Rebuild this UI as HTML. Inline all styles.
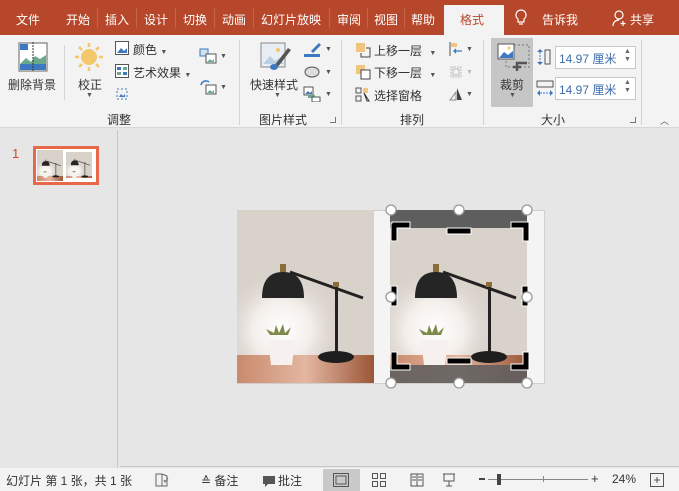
<!DOCTYPE html>
<html><head><meta charset="utf-8"><style>
*{margin:0;padding:0;box-sizing:border-box}
body{width:679px;height:491px;overflow:hidden;background:#e6e6e6;font-family:"Liberation Sans","Noto Sans CJK SC",sans-serif;font-size:12px;color:#333;position:relative}
.a{position:absolute;white-space:nowrap}
.tab{position:absolute;top:11px;color:#fff;font-size:12px}
.sep{position:absolute;top:8px;width:1px;height:20px;background:#c4654a}
.vs{position:absolute;width:1px;background:#d4d4d4}
.dd{font-size:7px;color:#555}
.grp{position:absolute;top:111px;font-size:12px;color:#333}
</style></head><body>
<div class="a" style="left:0;top:0;width:679px;height:35px;background:#b7472a"></div>
<div class="tab" style="left:16px">文件</div>
<div class="tab" style="left:66px">开始</div><div class="sep" style="left:97px"></div>
<div class="tab" style="left:105px">插入</div><div class="sep" style="left:136px"></div>
<div class="tab" style="left:144px">设计</div><div class="sep" style="left:175px"></div>
<div class="tab" style="left:183px">切换</div><div class="sep" style="left:214px"></div>
<div class="tab" style="left:222px">动画</div><div class="sep" style="left:253px"></div>
<div class="tab" style="left:261px">幻灯片放映</div><div class="sep" style="left:329px"></div>
<div class="tab" style="left:337px">审阅</div><div class="sep" style="left:367px"></div>
<div class="tab" style="left:374px">视图</div><div class="sep" style="left:404px"></div>
<div class="tab" style="left:411px">帮助</div>
<div class="a" style="left:444px;top:5px;width:60px;height:31px;background:#f3f3f3"></div>
<div class="a" style="left:460px;top:11px;color:#b7472a">格式</div>
<svg class="a" style="left:514px;top:9px" width="14" height="18"><path d="M7 1a5 5 0 0 0-3 9v3h6v-3a5 5 0 0 0-3-9zM5 15h4" fill="none" stroke="#fff" stroke-width="1.2"/></svg>
<div class="tab" style="left:542px">告诉我</div>
<svg class="a" style="left:612px;top:9px" width="16" height="18"><circle cx="7" cy="6" r="4" fill="none" stroke="#fff" stroke-width="1.2"/><path d="M1 17c0-4 3-6 6-6M11 12v5M8.5 14.5h5" fill="none" stroke="#fff" stroke-width="1.2"/></svg>
<div class="tab" style="left:630px">共享</div>
<div class="a" style="left:0;top:35px;width:679px;height:93px;background:#f3f3f3;border-bottom:1px solid #d6d6d6"></div>
<svg class="a" style="left:18px;top:42px" width="30" height="30"><rect x="1" y="1" width="28" height="28" fill="#fff" stroke="#666"/><rect x="2" y="2" width="8" height="6" fill="#3d79c1"/><path d="M2 22l6-6 5 4 4-6 5 3 6-4v10H2z" fill="#6aa88c"/><rect x="2" y="22" width="26" height="6" fill="#3d79c1"/><line x1="15" y1="0" x2="15" y2="30" stroke="#333" stroke-dasharray="2 1"/></svg>
<div class="a" style="left:8px;top:76px">删除背景</div>
<div class="vs" style="left:64px;top:45px;height:55px"></div>
<svg class="a" style="left:74px;top:42px" width="30" height="30"><circle cx="15" cy="15" r="8" fill="#f2c86a"/><g stroke="#f2c86a" stroke-width="2.5"><line x1="15" y1="1" x2="15" y2="5"/><line x1="15" y1="25" x2="15" y2="29"/><line x1="1" y1="15" x2="5" y2="15"/><line x1="25" y1="15" x2="29" y2="15"/><line x1="5" y1="5" x2="8" y2="8"/><line x1="22" y1="22" x2="25" y2="25"/><line x1="5" y1="25" x2="8" y2="22"/><line x1="22" y1="8" x2="25" y2="5"/></g></svg>
<div class="a" style="left:78px;top:76px">校正</div>
<div class="a dd" style="left:86px;top:92px">▼</div>
<svg class="a" style="left:115px;top:41px" width="14" height="14"><rect x=".5" y=".5" width="13" height="13" fill="#fff" stroke="#555"/><path d="M2 12l4-5 3 3 3-3v5z" fill="#3d79c1"/></svg>
<div class="a" style="left:133px;top:41px">颜色 <span class="dd">▼</span></div>
<svg class="a" style="left:115px;top:64px" width="14" height="14"><rect x=".5" y=".5" width="13" height="13" fill="#fff" stroke="#555"/><rect x="2" y="3" width="4" height="3" fill="#3d79c1"/><rect x="8" y="3" width="4" height="3" fill="#6aa88c"/><rect x="2" y="8" width="4" height="3" fill="#6aa88c"/><rect x="8" y="8" width="4" height="3" fill="#3d79c1"/></svg>
<div class="a" style="left:133px;top:64px">艺术效果 <span class="dd">▼</span></div>
<svg class="a" style="left:115px;top:87px" width="14" height="14"><rect x="2" y="2" width="10" height="10" fill="none" stroke="#3d79c1" stroke-dasharray="2 2"/><path d="M4 10l2-3 2 2 2-2v3z" fill="#3d79c1"/></svg>
<svg class="a" style="left:199px;top:48px" width="18" height="16"><rect x="1" y="1" width="8" height="7" fill="#cfe0ee" stroke="#3d79c1"/><rect x="7" y="6" width="10" height="9" fill="#fff" stroke="#555"/><path d="M8 14l3-3 2 2 2-2v3z" fill="#6aa88c"/></svg><div class="a dd" style="left:220px;top:53px">▼</div>
<svg class="a" style="left:199px;top:79px" width="18" height="16"><path d="M2 6a5 5 0 0 1 8-3" fill="none" stroke="#3d79c1" stroke-width="1.5"/><rect x="7" y="6" width="10" height="9" fill="#fff" stroke="#555"/><path d="M8 14l3-3 2 2 2-2v3z" fill="#6aa88c"/></svg><div class="a dd" style="left:220px;top:84px">▼</div>
<div class="grp" style="left:107px">调整</div>
<div class="vs" style="left:239px;top:40px;height:85px"></div>
<svg class="a" style="left:260px;top:42px" width="34" height="30"><rect x="1" y="1" width="24" height="24" fill="#e8eef4" stroke="#888"/><path d="M3 22l7-8 5 5 4-3 5 6z" fill="#b8cfe6"/><circle cx="18" cy="8" r="2" fill="#f2c86a"/><path d="M14 24l14-18 3 2-14 18z" fill="#555"/><ellipse cx="14" cy="25" rx="4" ry="3" fill="#3d79c1"/></svg>
<div class="a" style="left:250px;top:76px">快速样式</div>
<div class="a dd" style="left:274px;top:92px">▼</div>
<svg class="a" style="left:303px;top:41px" width="18" height="16"><path d="M8 10l8-8 2 2-8 8z" fill="#3d79c1"/><rect x="1" y="13" width="16" height="3" fill="#3d79c1"/></svg><div class="a dd" style="left:325px;top:46px">▼</div>
<svg class="a" style="left:303px;top:64px" width="18" height="16"><ellipse cx="9" cy="8" rx="7" ry="5" fill="#ddd" stroke="#555"/></svg><div class="a dd" style="left:325px;top:69px">▼</div>
<svg class="a" style="left:303px;top:86px" width="18" height="16"><rect x="1" y="1" width="9" height="8" fill="#fff" stroke="#555"/><path d="M2 8l3-3 2 2 2-2v3z" fill="#3d79c1"/><rect x="5" y="9" width="7" height="3" fill="#6aa88c"/><rect x="9" y="11" width="8" height="5" fill="#fff" stroke="#555"/></svg><div class="a dd" style="left:325px;top:91px">▼</div>
<div class="grp" style="left:259px">图片样式</div>
<div class="a" style="left:330px;top:117px;width:6px;height:6px;border-right:1px solid #777;border-bottom:1px solid #777"></div>
<div class="vs" style="left:341px;top:40px;height:85px"></div>
<svg class="a" style="left:355px;top:42px" width="16" height="16"><rect x="1" y="1" width="9" height="9" fill="#f0c57e"/><path d="M6 11v4h9V6h-4" fill="none" stroke="#444"/></svg>
<div class="a" style="left:374px;top:42px">上移一层 <span class="dd" style="margin-left:4px">▼</span></div>
<svg class="a" style="left:355px;top:64px" width="16" height="16"><rect x="1" y="1" width="9" height="9" fill="#f0c57e"/><rect x="6" y="6" width="9" height="9" fill="#fff" stroke="#444"/></svg>
<div class="a" style="left:374px;top:64px">下移一层 <span class="dd" style="margin-left:4px">▼</span></div>
<svg class="a" style="left:355px;top:87px" width="16" height="16"><rect x="1" y="1" width="5" height="5" fill="none" stroke="#555"/><rect x="1" y="9" width="5" height="5" fill="none" stroke="#555"/><rect x="8" y="1" width="5" height="5" fill="#f0c57e"/><path d="M9 6l5 8-2 0z" fill="#fff" stroke="#333"/></svg>
<div class="a" style="left:374px;top:87px">选择窗格</div>
<svg class="a" style="left:448px;top:41px" width="16" height="16"><line x1="2" y1="1" x2="2" y2="15" stroke="#555"/><rect x="3" y="2" width="6" height="4" fill="#f0c57e"/><path d="M14 10H6m2-2-2 2 2 2" fill="none" stroke="#3d79c1" stroke-width="1.3"/></svg><div class="a dd" style="left:466px;top:46px">▼</div>
<svg class="a" style="left:448px;top:64px" width="16" height="16"><rect x="3" y="3" width="10" height="10" fill="none" stroke="#bbb" stroke-dasharray="2 1"/><rect x="5" y="5" width="6" height="6" fill="none" stroke="#bbb"/></svg><div class="a dd" style="left:466px;top:69px;color:#bbb">▼</div>
<svg class="a" style="left:448px;top:86px" width="16" height="16"><path d="M2 14l6-8v8z" fill="none" stroke="#888"/><path d="M9 2v12h5z" fill="#444"/></svg><div class="a dd" style="left:466px;top:91px">▼</div>
<div class="grp" style="left:400px">排列</div>
<div class="vs" style="left:483px;top:40px;height:85px"></div>
<div class="a" style="left:491px;top:38px;width:42px;height:69px;background:#c6c6c6"></div>
<svg class="a" style="left:497px;top:43px" width="34" height="32"><rect x="9" y="2" width="23" height="22" fill="none" stroke="#777" stroke-dasharray="2 2"/><rect x="1" y="1" width="16" height="15" fill="#fff" stroke="#555"/><path d="M2 15l5-6 4 3 5-4v7z" fill="#3d79c1"/><circle cx="12" cy="5" r="1.5" fill="#f2c86a"/><path d="M20 28v-8h10M24 24h-8" stroke="#555" stroke-width="2.5" fill="none"/></svg>
<div class="a" style="left:500px;top:76px">裁剪</div>
<div class="a dd" style="left:509px;top:92px">▼</div>
<svg class="a" style="left:536px;top:48px" width="16" height="18"><path d="M4 1l3 3H1zM4 17l3-3H1z" fill="#3d79c1"/><line x1="4" y1="4" x2="4" y2="14" stroke="#3d79c1" stroke-dasharray="2 1"/><rect x="9" y="2" width="5" height="14" fill="none" stroke="#555"/></svg>
<div class="a" style="left:555px;top:46px;width:81px;height:23px;background:#fff;border:1px solid #c8c8c8"></div>
<div class="a" style="left:559px;top:50px;color:#3d6ea8;font-size:12px">14.97 厘米</div>
<div class="a dd" style="left:624px;top:48px;line-height:8px;color:#666">▲<br>▼</div>
<svg class="a" style="left:536px;top:80px" width="18" height="18"><rect x="1" y="1" width="16" height="6" fill="none" stroke="#555"/><path d="M1 13l3-3v6zM17 13l-3-3v6z" fill="#3d79c1"/><line x1="4" y1="13" x2="14" y2="13" stroke="#3d79c1" stroke-dasharray="2 1"/></svg>
<div class="a" style="left:555px;top:77px;width:81px;height:23px;background:#fff;border:1px solid #c8c8c8"></div>
<div class="a" style="left:559px;top:81px;color:#3d6ea8;font-size:12px">14.97 厘米</div>
<div class="a dd" style="left:624px;top:79px;line-height:8px;color:#666">▲<br>▼</div>
<div class="grp" style="left:541px">大小</div>
<div class="a" style="left:630px;top:117px;width:6px;height:6px;border-right:1px solid #777;border-bottom:1px solid #777"></div>
<div class="vs" style="left:641px;top:40px;height:85px"></div>
<div class="a" style="left:660px;top:114px;font-size:9px;color:#555">︿</div>
<div class="a" style="left:117px;top:130px;width:1px;height:338px;background:#c8c8c8"></div>
<div class="a" style="left:120px;top:466px;width:559px;height:1px;background:#c8c8c8"></div>
<div class="a" style="left:12px;top:146px;color:#d24726;font-size:13px">1</div>
<div class="a" style="left:33px;top:146px;width:66px;height:39px;border:3px solid #e8694a;background:#fff"></div>
<svg class="a" style="left:37px;top:150px" width="26" height="31" viewBox="0 0 137 173" preserveAspectRatio="none"><use href="#ph"/></svg>
<svg class="a" style="left:66px;top:152px" width="26" height="26" viewBox="0 18 137 137" preserveAspectRatio="none"><use href="#ph"/></svg>
<div class="a" style="left:237px;top:210px;width:308px;height:174px;background:#f4f4f4;border:1px solid #cfcfcf"></div>
<svg class="a" style="left:237px;top:210px" width="137" height="173" viewBox="0 0 137 173">
<defs>
<radialGradient id="gl" cx="45" cy="120" r="60" gradientUnits="userSpaceOnUse"><stop offset="0" stop-color="#fff"/><stop offset=".5" stop-color="#f3eeea"/><stop offset="1" stop-color="#ddd5cf" stop-opacity="0"/></radialGradient>
<linearGradient id="tb" x1="0" y1="0" x2="1" y2="0"><stop offset="0" stop-color="#c98a6e"/><stop offset=".5" stop-color="#e3b7a1"/><stop offset="1" stop-color="#9b5638"/></linearGradient>
<g id="ph">
<rect width="137" height="173" fill="#d9d2cb"/>
<rect width="137" height="173" fill="url(#gl)"/>
<rect y="145" width="137" height="28" fill="url(#tb)"/>
<path d="M53 62L126 88" stroke="#222" stroke-width="3"/>
<rect x="43" y="54" width="6" height="10" fill="#8a6d3b"/>
<path d="M25 88Q25 62 46 62Q67 62 67 88z" fill="#252525"/>
<rect x="98" y="74" width="3" height="72" fill="#222"/>
<rect x="96" y="72" width="6" height="5" fill="#8a6d3b"/>
<ellipse cx="99" cy="147" rx="18" ry="6" fill="#1e1e1e"/>
<path d="M33 125l-4-6 8 4 2-8 3 8 4-9 2 9 6-6-3 8z" fill="#7d8a4a"/>
<path d="M31 130h27l-3 25H34z" fill="#f6f1ef"/>
</g></defs>
<use href="#ph"/>
</svg>
<svg class="a" style="left:390px;top:210px" width="137" height="173" viewBox="0 0 137 173"><use href="#ph"/><rect width="137" height="18" fill="#5e5e5e"/><rect y="155" width="137" height="18" fill="#5e5e5e" opacity=".88"/></svg>
<svg class="a" style="left:383px;top:203px" width="152" height="187">
<g fill="#000" stroke="#fff" stroke-width="1">
<path d="M8 26V20h1v-1h18v6H14v13H8z"/>
<path d="M129 25h-1v-6h18v19h-6V25z"/>
<path d="M8 149h6v12h13v6H8z"/>
<path d="M140 149h6v18h-18v-6h12z"/>
<rect x="64" y="25" width="24" height="6"/>
<rect x="64" y="155" width="24" height="6"/>
<rect x="8" y="83" width="6" height="20"/>
<rect x="139" y="83" width="6" height="20"/>
</g>
<g fill="#fff" stroke="#999" stroke-width="1.3">
<circle cx="8" cy="7" r="5"/><circle cx="76" cy="7" r="5"/><circle cx="144" cy="7" r="5"/>
<circle cx="8" cy="180" r="5"/><circle cx="76" cy="180" r="5"/><circle cx="144" cy="180" r="5"/>
<circle cx="8" cy="94" r="5"/><circle cx="144" cy="94" r="5"/>
</g></svg>
<div class="a" style="left:0;top:468px;width:679px;height:23px;background:#f3f3f3"></div>
<div class="a" style="left:6px;top:472px">幻灯片 第 1 张，共 1 张</div>
<svg class="a" style="left:155px;top:473px" width="14" height="14"><path d="M1 1h6v12H1zM7 1l5 2v10H7" fill="none" stroke="#666"/><path d="M9 7l1 2 3-4" fill="none" stroke="#666"/></svg>
<div class="a" style="left:201px;top:472px">≙ 备注</div>
<svg class="a" style="left:262px;top:474px" width="14" height="13"><path d="M1 2h12v8H6l-3 3v-3H1z" fill="#555"/></svg>
<div class="a" style="left:278px;top:472px">批注</div>
<div class="a" style="left:323px;top:469px;width:37px;height:22px;background:#c9c9c9"></div>
<svg class="a" style="left:333px;top:473px" width="16" height="14"><rect x=".5" y=".5" width="15" height="13" fill="none" stroke="#555"/><rect x="3" y="3" width="10" height="8" fill="none" stroke="#555"/></svg>
<svg class="a" style="left:372px;top:473px" width="14" height="14"><g fill="none" stroke="#555"><rect x=".5" y=".5" width="5" height="5"/><rect x="8.5" y=".5" width="5" height="5"/><rect x=".5" y="8.5" width="5" height="5"/><rect x="8.5" y="8.5" width="5" height="5"/></g></svg>
<svg class="a" style="left:410px;top:473px" width="14" height="14"><path d="M1 1h6v12H1zM7 1h6v12H7M2 4h4M2 7h4M8 4h4M8 7h4" fill="none" stroke="#555"/></svg>
<svg class="a" style="left:442px;top:473px" width="14" height="14"><path d="M1 1h12M2 1v7h10V1M7 8v5M4 13h6" fill="none" stroke="#555"/></svg>
<div class="a" style="left:479px;top:478px;width:6px;height:2px;background:#444"></div>
<div class="a" style="left:488px;top:479px;width:100px;height:1px;background:#888"></div>
<div class="a" style="left:497px;top:474px;width:4px;height:11px;background:#444"></div>
<div class="a" style="left:543px;top:476px;width:1px;height:6px;background:#888"></div>
<div class="a" style="left:591px;top:471px;font-size:13px">+</div>
<div class="a" style="left:612px;top:472px">24%</div>
<svg class="a" style="left:650px;top:473px" width="14" height="14"><rect x=".5" y=".5" width="13" height="13" fill="none" stroke="#555"/><path d="M4 7h6M7 4v6" stroke="#555"/></svg>
</body></html>
